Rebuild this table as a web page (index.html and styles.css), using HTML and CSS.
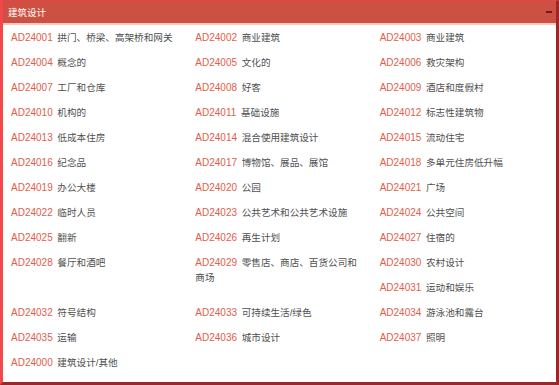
FILE: index.html
```html
<!DOCTYPE html>
<html>
<head>
<meta charset="utf-8">
<link rel="stylesheet" href="styles.css">
</head>
<body>
<div class="panel">
  <div class="header">
    <span class="title">建筑设计</span>
    <span class="minus"></span>
  </div>
  <ul class="list">
    <li><span class="code">AD24001</span> 拱门、桥梁、高架桥和网关</li>
    <li><span class="code">AD24002</span> 商业建筑</li>
    <li><span class="code">AD24003</span> 商业建筑</li>
    <li><span class="code">AD24004</span> 概念的</li>
    <li><span class="code">AD24005</span> 文化的</li>
    <li><span class="code">AD24006</span> 救灾架构</li>
    <li><span class="code">AD24007</span> 工厂和仓库</li>
    <li><span class="code">AD24008</span> 好客</li>
    <li><span class="code">AD24009</span> 酒店和度假村</li>
    <li><span class="code">AD24010</span> 机构的</li>
    <li><span class="code">AD24011</span> 基础设施</li>
    <li><span class="code">AD24012</span> 标志性建筑物</li>
    <li><span class="code">AD24013</span> 低成本住房</li>
    <li><span class="code">AD24014</span> 混合使用建筑设计</li>
    <li><span class="code">AD24015</span> 流动住宅</li>
    <li><span class="code">AD24016</span> 纪念品</li>
    <li><span class="code">AD24017</span> 博物馆、展品、展馆</li>
    <li><span class="code">AD24018</span> 多单元住房低升幅</li>
    <li><span class="code">AD24019</span> 办公大楼</li>
    <li><span class="code">AD24020</span> 公园</li>
    <li><span class="code">AD24021</span> 广场</li>
    <li><span class="code">AD24022</span> 临时人员</li>
    <li><span class="code">AD24023</span> 公共艺术和公共艺术设施</li>
    <li><span class="code">AD24024</span> 公共空间</li>
    <li><span class="code">AD24025</span> 翻新</li>
    <li><span class="code">AD24026</span> 再生计划</li>
    <li><span class="code">AD24027</span> 住宿的</li>
    <li><span class="code">AD24028</span> 餐厅和酒吧</li>
    <li><span class="code">AD24029</span> 零售店、商店、百货公司和商场</li>
    <li><span class="code">AD24030</span> 农村设计</li>
    <li><span class="code">AD24031</span> 运动和娱乐</li>
    <li><span class="code">AD24032</span> 符号结构</li>
    <li><span class="code">AD24033</span> 可持续生活/绿色</li>
    <li><span class="code">AD24034</span> 游泳池和露台</li>
    <li><span class="code">AD24035</span> 运输</li>
    <li><span class="code">AD24036</span> 城市设计</li>
    <li><span class="code">AD24037</span> 照明</li>
    <li><span class="code">AD24000</span> 建筑设计/其他</li>
  </ul>
</div>
</body>
</html>
```
FILE: styles.css
```css
html, body {
  margin: 0;
  padding: 0;
  background: #ffffff;
}
.panel {
  box-sizing: border-box;
  width: 559px;
  height: 385px;
  border-left: 3px solid #f24848;
  border-top: 1px solid #e84444;
  border-right: 3px solid #9a2828;
  border-bottom: 3px solid #9a2828;
  font-family: "Liberation Sans", "Noto Sans CJK SC", sans-serif;
  overflow: hidden;
}
.header {
  height: 22px;
  background: #cc5142;
  border-bottom: 2px solid #f3cbc4;
  display: flex;
  align-items: center;
  justify-content: space-between;
  padding: 0 4px 0 5px;
}
.title {
  color: #ffffff;
  font-size: 9.5px;
}
.minus {
  width: 6px;
  height: 2px;
  background: #6e1c1c;
}
.list {
  list-style: none;
  margin: 0;
  padding: 0;
}
.list::after {
  content: "";
  display: block;
  clear: both;
}
.list li {
  float: left;
  box-sizing: border-box;
  width: 33.333%;
  padding: 5px 8px;
  font-size: 9.6px;
  line-height: 15px;
  color: #505050;
  word-spacing: 2px;
}
.code {
  color: #e25d4b;
  font-size: 10px;
}
```
